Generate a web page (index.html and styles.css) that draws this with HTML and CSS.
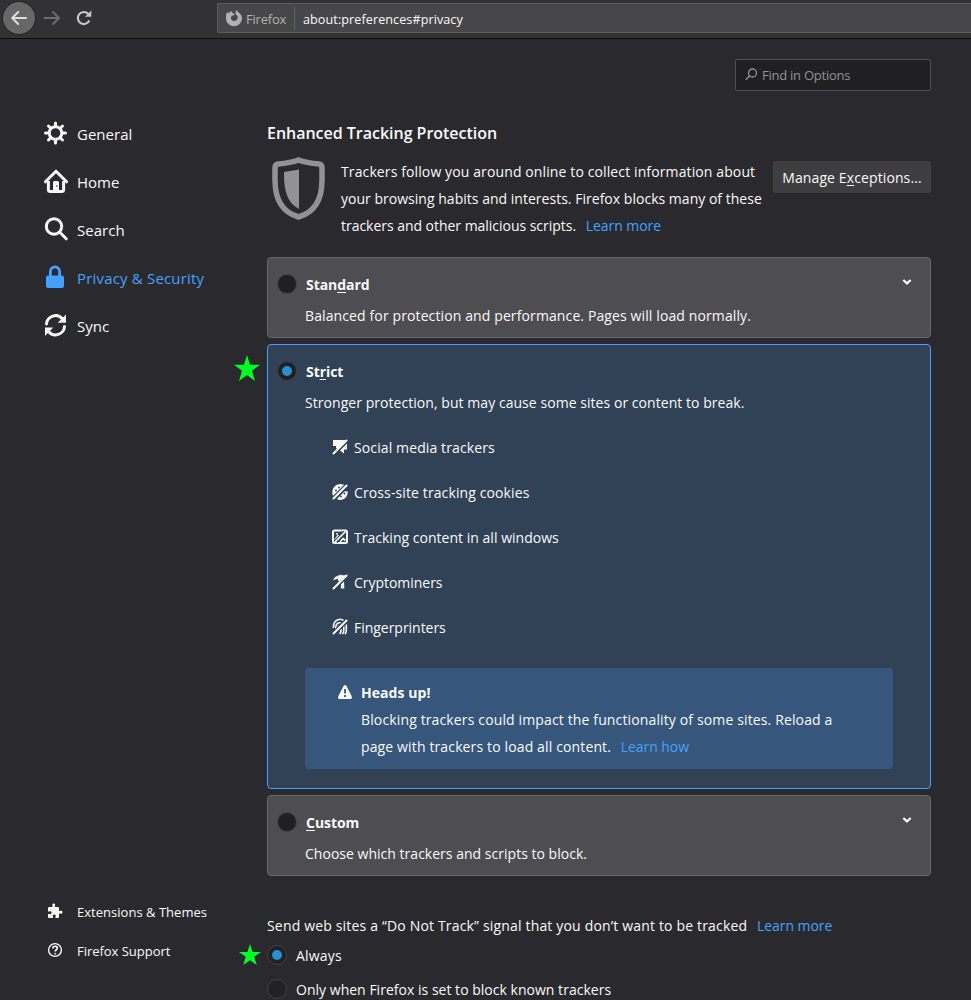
FILE: index.html
```html
<!DOCTYPE html>
<html lang="en">
<head>
<meta charset="utf-8">
<title>Options</title>
<link rel="stylesheet" href="styles.css">
</head>
<body>
<header class="toolbar">
  <button class="back" aria-label="Back"><svg width="32" height="32" viewBox="0 0 32 32" class="line"><path d="M23 16H9.500M15.200 10l-6 6 6 6"/></svg></button>
  <svg class="forward line" width="18" height="18" viewBox="0 0 18 18"><path d="M1.500 9h14M10 3l6 6-6 6"/></svg>
  <svg class="reload" width="18" height="18" viewBox="0 0 18 18"><path d="M14.300 11.500A6 6 0 1 1 13.300 5" fill="none" stroke="currentColor" stroke-width="2.200"/><path d="M16.300 1.500v6.300H10z" fill="currentColor"/></svg>
  <div class="urlbar">
    <svg width="18" height="18" viewBox="0 0 18 18"><path fill="currentColor" fill-rule="evenodd" d="M1 5.500L2.500 3l1 1.300C4.500 3 6 2.300 7 2.300L7.500 4l2.500 1.200L8 6.500l-1.500.8c-1.500 2 0 4.700 2.500 4.700 3 0 4.400-2.900 3.400-5L10.500 5l.2-2.500L12 .8c.3 1.800 1.300 2.300 2.500 3.500C16 5.500 17 7.500 17 9.500A8 7.500 0 0 1 1 10z"/></svg>
    <span class="brand">Firefox</span>
    <span class="address">about:preferences#privacy</span>
  </div>
</header>
<div class="page">
  <nav class="sidebar">
    <div class="categories">
      <a class="category"><svg width="24" height="24" viewBox="0 0 24 24"><g fill="none" stroke="currentColor"><circle cx="11.500" cy="12" r="6.300" stroke-width="3"/><path stroke-width="3" stroke-linecap="round" d="M11.500 5V2M11.500 19v3M4.500 12h-3M18.500 12h3M6.500 7l-2-2M16.500 17l2 2M16.500 7l2-2M6.500 17l-2 2"/></g></svg><span>General</span></a>
      <a class="category"><svg width="24" height="24" viewBox="0 0 24 24"><path d="M1.400 12.800L12 2.200l10.600 10.600" fill="none" stroke="currentColor" stroke-width="3" stroke-linecap="round" stroke-linejoin="round"/><path d="M4.400 12v8.500q0 2 2 2h11.200q2 0 2-2V12" fill="none" stroke="currentColor" stroke-width="3"/><path d="M9 23v-9.500q0-1.500 1.500-1.500h3q1.500 0 1.500 1.500V23z" fill="currentColor"/><circle cx="12.900" cy="17" r=".8" fill="#2a2a2e"/></svg><span>Home</span></a>
      <a class="category"><svg width="24" height="24" viewBox="0 0 24 24"><g fill="none" stroke="currentColor" stroke-width="3" stroke-linecap="round"><circle cx="10" cy="9.500" r="7.700"/><path d="M15.700 15.200l6.600 6.600"/></g></svg><span>Search</span></a>
      <a class="category selected"><svg width="24" height="24" viewBox="0 0 24 24"><path d="M6.400 12V6.800a4.600 5 0 0 1 9.200 0V12" fill="none" stroke="currentColor" stroke-width="2.800"/><rect x="2" y="10.500" width="18" height="12.500" rx="2" fill="currentColor"/></svg><span>Privacy &amp; Security</span></a>
      <a class="category"><svg width="24" height="24" viewBox="0 0 24 24"><path d="M2.500 11A9 9 0 0 1 18.500 6M20.500 13.500A9 9 0 0 1 4.500 18.500" fill="none" stroke="currentColor" stroke-width="2.900" stroke-linecap="round"/><path d="M22 1.500v8.300h-8.300zM1 23v-8.500h8.300z" fill="currentColor"/></svg><span>Sync</span></a>
    </div>
    <div class="support">
      <a><svg width="16" height="16" viewBox="0 0 16 16" fill="currentColor"><path d="M1 5q0-1 1-1h3.500V2.800C5 2.200 5 .5 6.700.5S8.400 2.200 7.900 2.800V4H11q1 0 1 1v3h1c.5-.6 2.500-.6 2.500 1.200S13.500 11 13 10.400h-1V14q0 1-1 1H8.500v-1.500c.6-.7.300-2-1.200-2s-2 1.300-1.300 2V15H2q-1 0-1-1v-3h1.500c.7.600 2 .3 2-1.300s-1.300-1.900-2-1.200H1z"/></svg><span>Extensions &amp; Themes</span></a>
      <a><svg width="16" height="16" viewBox="0 0 16 16" fill="none" stroke="currentColor"><circle cx="8" cy="8" r="6.400" stroke-width="1.400"/><path d="M5.900 6.500C5.900 3.500 10.400 3.600 10.300 6.300 10.200 7.800 8.200 7.700 8.200 9.500" stroke-width="1.700"/><circle cx="8.200" cy="11.700" r=".6"/></svg><span class="tight">Firefox Support</span></a>
    </div>
  </nav>
  <main class="main">
    <div class="search"><svg width="13" height="13" viewBox="0 0 13 13" fill="none" stroke="currentColor" stroke-width="1.300"><circle cx="7.500" cy="5" r="4"/><path d="M4.700 7.800L.8 11.800"/></svg><span>Find in Options</span></div>
    <h2>Enhanced Tracking Protection</h2>
    <section class="intro">
      <svg class="shield" width="56" height="64" viewBox="0 0 56 64"><path d="M27.500 3C34 5.500 42 6.500 48 7q3 .5 3 4v12c0 18-6.500 32-23.500 37C10.500 55 4 41 4 23V11q0-3.500 3-4C13 6.500 21 5.500 27.500 3z" fill="none" stroke="currentColor" stroke-width="5.500"/><path d="M28 12.500V52C15 45 13 32 13 15z" fill="currentColor"/></svg>
      <p><span class="wide">Trackers follow you around online to collect information about</span><br><span>your browsing habits and interests. Firefox blocks many of these</span><br><span class="tight">trackers and other malicious scripts.</span> <a class="link">Learn more</a></p>
      <button class="exceptions">Manage E<u>x</u>ceptions...</button>
    </section>
    <section class="options">
      <article class="card">
        <div class="card-title"><i class="radio"></i><b>Stan<u>d</u>ard</b><svg class="chevron" width="10" height="8" viewBox="0 0 10 8"><path d="M1.300 2L5 5.400 8.700 2"/></svg></div>
        <p class="card-text wide">Balanced for protection and performance. Pages will load normally.</p>
      </article>
      <article class="card active">
        <svg class="star" width="26" height="26" viewBox="0 0 26 26"><path d="M13 0l3 9.800h10l-8 6L21 26l-8-6-8 6 3-10.200-8-6h10z"/></svg>
        <div class="card-title"><i class="radio on"></i><b>St<u>r</u>ict</b></div>
        <p class="card-text medium">Stronger protection, but may cause some sites or content to break.</p>
        <ul class="trackers">
          <li><svg viewBox="0 0 16 16"><path fill="currentColor" d="M1 1h13L6.500 9.500H4V7H1zM15 3.500V10.500h-3V14.500L8 11.500z"/><path class="gap below" d="M3 15L15.500 2.500"/><path class="slash" d="M1.500 14.500L14.500 1.500"/></svg><span class="wide">Social media trackers</span></li>
          <li><svg viewBox="0 0 16 16"><path fill="currentColor" d="M8 0q4 0 4.500 1.500L2 13Q0 11 .3 7q1-6 7.700-7zM15.700 7c.5 5-3 9-7.700 9q-2 0-3-1l8-8q1.500 1 2.700 0z"/><path class="gap" d="M1 15L15 1"/><path class="slash" d="M1.500 14.500L14.500 1.500"/><g fill="#314257"><circle cx="7" cy="3.500" r=".9"/><circle cx="4" cy="6.500" r=".9"/><circle cx="12.500" cy="9.500" r=".9"/><circle cx="9" cy="12.500" r=".9"/></g></svg><span class="wide">Cross-site tracking cookies</span></li>
          <li><svg viewBox="0 0 16 16" fill="none" stroke="currentColor"><rect x="1" y="1.500" width="14" height="12.500" rx="1.500" stroke-width="2"/><path d="M3 11l3-4 2 1M8 12.500l3-3 2.500 2" stroke-width="1.800"/><path class="gap" d="M4 12.500L13 3.500"/><path d="M3 13L13.500 2.500" stroke-width="1.700"/><circle cx="5" cy="4.900" r=".6"/></svg><span>Tracking content in all windows</span></li>
          <li><svg viewBox="0 0 16 16"><path fill="currentColor" d="M1 6.500Q3 1.500 7.500 1.300L8.500.5 10 1.300H14L7 8 5.500 4.800 3 5.500zM9 8l3-3 .3 9.500H8.800z"/><path class="gap below" d="M3 15L15 3"/><path class="slash" d="M1.500 14.500L14.500 1.500"/></svg><span class="tight">Cryptominers</span></li>
          <li><svg viewBox="0 0 16 16" fill="none" stroke="currentColor" stroke-width="1.600"><path d="M1.500 9C1-1 10-1 12.500 2.500M3.800 10V7.500Q4.500 3 9 3.800M6.200 8.500q0-2 2-2M14.300 5.500v5.500q0 3-1.500 4M11.800 7.500v3.500q0 2.500-1.500 4M9.200 10q0 3-1.500 5"/><path class="gap" d="M1 15L15 1"/><path class="slash" d="M1.500 14.500L14.500 1.500"/></svg><span class="tight">Fingerprinters</span></li>
        </ul>
        <aside class="notice">
          <svg width="16" height="16" viewBox="0 0 16 16"><path d="M8 1q1 0 1.600 1.200l5 9.800q1.100 3-1.200 3H2.600Q.3 15 1.400 12l5-9.800Q7 1 8 1z" fill="currentColor"/><path d="M8 5v4.500M8 11v2" stroke="#36567c" stroke-width="1.800"/></svg>
          <div><b>Heads up!</b><p><span class="wider">Blocking trackers could impact the functionality of some sites. Reload a</span><br><span class="wider">page with trackers to load all content.</span> <a class="link">Learn how</a></p></div>
        </aside>
      </article>
      <article class="card">
        <div class="card-title"><i class="radio"></i><b><u>C</u>ustom</b><svg class="chevron" width="10" height="8" viewBox="0 0 10 8"><path d="M1.300 2L5 5.400 8.700 2"/></svg></div>
        <p class="card-text">Choose which trackers and scripts to block.</p>
      </article>
    </section>
    <section class="dnt">
      <p><span class="signal">Send web sites a “Do Not Track” signal that you don’t want to be tracked</span> <a class="link">Learn more</a></p>
      <div class="choice"><svg class="star small" width="22" height="21" viewBox="0 0 26 26" preserveAspectRatio="none"><path d="M13 0l3 9.800h10l-8 6L21 26l-8-6-8 6 3-10.200-8-6h10z"/></svg><i class="radio on"></i><span class="signal">Always</span></div>
      <div class="choice"><i class="radio"></i><span>Only when Firefox is set to block known trackers</span></div>
    </section>
  </main>
</div>
</body>
</html>
```
FILE: styles.css
```css
* { box-sizing: border-box; }
body { margin: 0; height: 1000px; overflow: hidden; background: #2a2a2e; color: #f9f9fa; font: 14px/27px "Open Sans", "Noto Sans", sans-serif; letter-spacing: .02px; }
p, h2, ul { margin: 0; padding: 0; }
button { border: 0; padding: 0; font: inherit; color: inherit; letter-spacing: inherit; }
svg { display: block; flex: none; overflow: visible; }
span, b { white-space: nowrap; }
u { text-underline-offset: 2px; text-decoration-thickness: 1px; }
.tight { letter-spacing: -.03px; }
.medium { letter-spacing: .05px; }
.wide { letter-spacing: .115px; }
.wider { letter-spacing: .135px; }
.signal { letter-spacing: .17px; }

.toolbar { height: 39px; display: flex; align-items: flex-start; background: #323234; border-bottom: 1px solid #0c0c0d; }
.line { fill: none; stroke: currentColor; stroke-width: 2; stroke-linecap: round; stroke-linejoin: round; }
.back { width: 32px; height: 32px; margin: 2px 0 0 3px; border-radius: 50%; background: #676767; color: #dedede; box-shadow: 0 0 0 1px #252527; }
.forward { margin: 9px 0 0 8px; color: #6d6d6e; }
.reload { margin: 9px 0 0 14px; color: #c8c8c8; }
.urlbar { margin: 3px 0 0 124px; flex: 1; height: 30px; display: flex; align-items: center; padding-left: 7px; background: #474749; border: 1px solid #5c5c5e; border-right: 0; border-radius: 2px 0 0 2px; color: #b1b1b3; font-size: 13px; }
.brand { margin-left: 3px; width: 49px; line-height: 22px; padding-top: 1px; border-right: 1px solid #5c6472; letter-spacing: -.2px; }
.address { margin-left: 8px; padding-top: 2px; color: #f9f9fa; font-size: 12.600px; letter-spacing: .08px; }

.page { height: 961px; display: grid; grid-template-columns: 267px 664px; }
.sidebar { display: flex; flex-direction: column; padding: 71px 0 0 44px; }
.category { height: 48px; display: flex; align-items: center; gap: 9px; font-size: 15px; }
.category svg { margin-top: -3px; }
.selected { color: #45a1ff; letter-spacing: .18px; }
.support { margin-top: 543px; padding-left: 3px; font-size: 13px; }
.support a { height: 39px; display: flex; align-items: center; gap: 14px; }
.support svg { margin-top: -3px; }

.main { display: flex; flex-direction: column; padding-top: 20px; }
.search { align-self: flex-end; width: 196px; height: 32px; display: flex; align-items: center; gap: 4px; padding-left: 9px; color: #929294; background: #202022; border: 1px solid #505052; border-radius: 2px; font-size: 13px; letter-spacing: -.25px; }
.search svg { margin-top: -2px; }
h2 { margin-top: 28px; font-size: 16px; line-height: 28px; font-weight: 600; letter-spacing: -.02px; }
.intro { height: 99px; margin-top: 11px; display: grid; grid-template-columns: 74px 432px 158px; align-items: start; }
.shield { margin: -1px 0 0 4px; color: #929294; }
.exceptions { margin-top: 3px; height: 32px; background: #3e3e40; border-radius: 2px; letter-spacing: .11px; }
.link { margin-left: 6px; color: #45a1ff; letter-spacing: -.05px; }

.options { display: grid; gap: 6px; }
.card { position: relative; height: 81px; padding: 13px 0 0 9px; border: 1px solid #68686b; border-radius: 4px; background: #4e4d51; }
.card.active { height: 445px; background: #314257; border-color: #45a1ff; }
.card-title { height: 27px; display: flex; align-items: center; }
.card-title b { margin-left: 9px; font-weight: 700; letter-spacing: -.06px; }
.radio { width: 20px; height: 20px; flex: none; border-radius: 50%; background: #202022; border: 1px solid #434347; display: grid; place-items: center; margin-top: -1px; }
.radio.on::after { content: ""; width: 10px; height: 10px; border-radius: 50%; background: #2490d5; }
.chevron { margin: -6px 18px 0 auto; fill: none; stroke: #f9f9fa; stroke-width: 2.200; }
.card-text { margin: 4px 0 0 28px; }
.trackers { list-style: none; margin: 9px 0 0 56px; }
.trackers li { display: flex; align-items: center; height: 45px; gap: 5px; }
.trackers svg { width: 16px; height: 16px; margin: -2px 1px 0 -1px; }
.slash { fill: none; stroke: #f9f9fa; stroke-width: 2; stroke-linecap: round; }
.gap { fill: none; stroke: #314257; stroke-width: 4.400; }
.gap.below { stroke-width: 2; }
.notice { width: 588px; height: 101px; margin: 18px 0 0 28px; padding: 11px 0 0 32px; border-radius: 4px; background: #36567c; display: flex; gap: 8px; }
.notice svg { margin-top: 5px; }
.notice b { display: block; letter-spacing: .06px; }
.star { position: absolute; left: -34px; top: 10px; fill: #00ff24; }
.dnt { margin-top: 36px; }
.choice { position: relative; display: flex; align-items: center; height: 33px; gap: 9px; }
.choice:last-child { margin-top: 1px; }
.choice .radio { background: #222225; }
.star.small { left: -28px; top: 5px; }
```
